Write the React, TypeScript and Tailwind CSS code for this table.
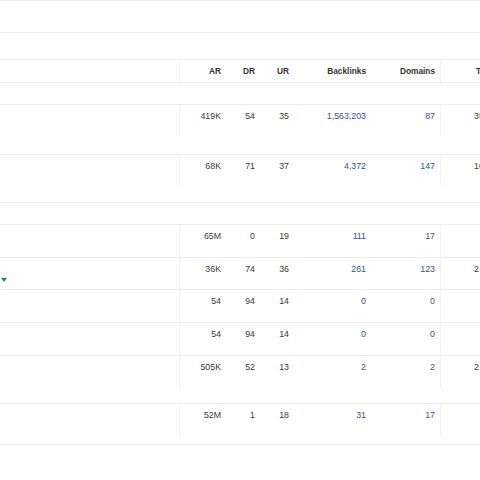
import React from "react";

type Row = {
  h: number;
  ar?: string;
  dr?: string;
  ur?: string;
  bl?: string;
  dm?: string;
  t?: string;
  tri?: boolean;
};

const rows: Row[] = [
  { h: 50, ar: "419K", dr: "54", ur: "35", bl: "1,563,203", dm: "87", t: "35" },
  { h: 48, ar: "68K", dr: "71", ur: "37", bl: "4,372", dm: "147", t: "102" },
  { h: 22 },
  { h: 33, ar: "65M", dr: "0", ur: "19", bl: "111", dm: "17", t: "" },
  { h: 32, ar: "36K", dr: "74", ur: "36", bl: "261", dm: "123", t: "2", tri: true },
  { h: 33, ar: "54", dr: "94", ur: "14", bl: "0", dm: "0", t: "" },
  { h: 33, ar: "54", dr: "94", ur: "14", bl: "0", dm: "0", t: "" },
  { h: 48, ar: "505K", dr: "52", ur: "13", bl: "2", dm: "2", t: "2" },
  { h: 41, ar: "52M", dr: "1", ur: "18", bl: "31", dm: "17", t: "" },
];

function DataRow({ r }: { r: Row }) {
  const blank = r.ar === undefined;
  return (
    <div
      className="flex border-b border-[#ececec] text-[8.8px] leading-[12px] text-[#3a3a3a]"
      style={{ height: r.h }}
    >
      <div className="w-[179px] shrink-0">
        {r.tri && (
          <svg width="6" height="5" viewBox="0 0 6 5" className="ml-[1px] mt-[20px]">
            <polygon points="0,0 6,0 3,4" fill="#2f8a3c" />
          </svg>
        )}
      </div>
      {!blank && (
        <>
          <div className="w-[49px] shrink-0 h-[32px] border-l border-[#f3f3f3] pt-[5px] pr-[7px] text-right">
            {r.ar}
          </div>
          <div className="w-[34px] shrink-0 pt-[5px] pr-[7px] text-right">{r.dr}</div>
          <div className="w-[34px] shrink-0 pt-[5px] pr-[7px] text-right">{r.ur}</div>
          <div className="w-[77px] shrink-0 pt-[5px] pr-[7px] text-right text-[#2a5796]">{r.bl}</div>
          <div className="w-[68px] shrink-0 h-[32px] border-r border-[#f3f3f3] pt-[5px] pr-[5px] text-right text-[#2a5796]">
            {r.dm}
          </div>
          <div className="shrink-0 pt-[5px] pl-[33px] whitespace-nowrap">{r.t}</div>
        </>
      )}
    </div>
  );
}

export default function App() {
  return (
    <div className="w-[480px] h-[480px] overflow-hidden bg-white font-['Liberation_Sans',Arial,sans-serif]">
      <div className="h-[33px] border-t border-b border-[#ececec]" />
      <div className="h-[27px] border-b border-[#ececec]" />
      <div className="flex h-[23px] border-b border-[#ececec] text-[8.3px] font-bold text-[#333] items-stretch">
        <div className="w-[179px] shrink-0" />
        <div className="w-[49px] shrink-0 border-l border-[#f3f3f3] pr-[7px] flex items-center justify-end">AR</div>
        <div className="w-[34px] shrink-0 pr-[7px] flex items-center justify-end">DR</div>
        <div className="w-[34px] shrink-0 pr-[7px] flex items-center justify-end">UR</div>
        <div className="w-[77px] shrink-0 pr-[7px] flex items-center justify-end">Backlinks</div>
        <div className="w-[68px] shrink-0 border-r border-[#f3f3f3] pr-[5px] flex items-center justify-end">Domains</div>
        <div className="shrink-0 pl-[35px] flex items-center whitespace-nowrap">Traffic</div>
      </div>
      <div className="h-[22px] border-b border-[#ececec]" />
      {rows.map((r, i) => (
        <DataRow key={i} r={r} />
      ))}
    </div>
  );
}
